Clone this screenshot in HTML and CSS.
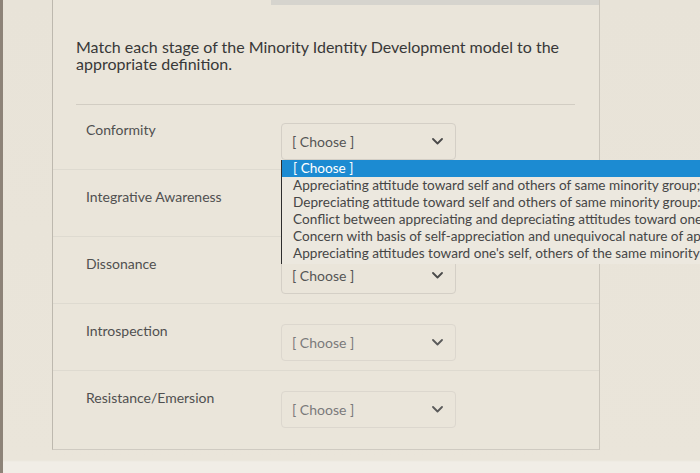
FILE: index.html
```html
<!DOCTYPE html>
<html lang="en">
<head>
<meta charset="utf-8">
<title>Matching question</title>
<link rel="stylesheet" href="styles.css">
</head>
<body>
<div class="screen">
  <div class="card">
    <div class="topbar"></div>
    <p class="question">Match each stage of the Minority Identity Development model to the appropriate definition.</p>
    <div class="divider"></div>
    <div class="rows">
      <div class="row">
        <div class="label">Conformity</div>
        <div class="select">
          <span class="value">[ Choose ]</span>
          <svg class="chev" width="11" height="7" viewBox="0 0 11 7"><path d="M1 1 L5.5 5.5 L10 1" fill="none" stroke="#4a4a4a" stroke-width="1.8" stroke-linecap="round" stroke-linejoin="round"/></svg>
          <ul class="dropdown">
            <li class="opt active">[ Choose ]</li>
            <li class="opt">Appreciating attitude toward self and others of same minority group; depreciating attitude toward others</li>
            <li class="opt">Depreciating attitude toward self and others of same minority group: appreciating attitude toward dominant group</li>
            <li class="opt">Conflict between appreciating and depreciating attitudes toward one's self and others</li>
            <li class="opt">Concern with basis of self-appreciation and unequivocal nature of appreciation of one's group</li>
            <li class="opt">Appreciating attitudes toward one's self, others of the same minority group, and other groups</li>
          </ul>
        </div>
      </div>
      <div class="row">
        <div class="label">Integrative Awareness</div>
        <div class="select covered">
          <span class="value">[ Choose ]</span>
          <svg class="chev" width="11" height="7" viewBox="0 0 11 7"><path d="M1 1 L5.5 5.5 L10 1" fill="none" stroke="#4a4a4a" stroke-width="1.8" stroke-linecap="round" stroke-linejoin="round"/></svg>
        </div>
      </div>
      <div class="row">
        <div class="label">Dissonance</div>
        <div class="select">
          <span class="value">[ Choose ]</span>
          <svg class="chev" width="11" height="7" viewBox="0 0 11 7"><path d="M1 1 L5.5 5.5 L10 1" fill="none" stroke="#4a4a4a" stroke-width="1.8" stroke-linecap="round" stroke-linejoin="round"/></svg>
        </div>
      </div>
      <div class="row">
        <div class="label">Introspection</div>
        <div class="select faded">
          <span class="value">[ Choose ]</span>
          <svg class="chev" width="11" height="7" viewBox="0 0 11 7"><path d="M1 1 L5.5 5.5 L10 1" fill="none" stroke="#5a5a5a" stroke-width="1.8" stroke-linecap="round" stroke-linejoin="round"/></svg>
        </div>
      </div>
      <div class="row">
        <div class="label">Resistance/Emersion</div>
        <div class="select faded">
          <span class="value">[ Choose ]</span>
          <svg class="chev" width="11" height="7" viewBox="0 0 11 7"><path d="M1 1 L5.5 5.5 L10 1" fill="none" stroke="#5a5a5a" stroke-width="1.8" stroke-linecap="round" stroke-linejoin="round"/></svg>
        </div>
      </div>
    </div>
  </div>
</div>
</body>
</html>
```

FILE: styles.css
```css
html, body {
  margin: 0;
  padding: 0;
}
body {
  width: 700px;
  height: 473px;
  overflow: hidden;
  background: #ebe6db;
  font-family: Lato, "Open Sans", sans-serif;
}
.screen {
  height: 473px;
  border-left: 3px solid #8d8378;
  box-sizing: border-box;
  background: linear-gradient(to bottom, #e8e3d8 0, #eae5da 460px, #f1ede6 462px);
}
.card {
  margin-left: 49px;
  width: 546px;
  border-left: 1px solid #bdb8ae;
  border-right: 1px solid #cbc6bc;
  border-bottom: 1px solid #cfcac1;
  background: #eae5da;
  padding-bottom: 12px;
}
.topbar {
  margin-left: 218px;
  height: 5px;
  background: #d6d4ce;
}
.question {
  margin: 0;
  padding: 33px 23px 0 23px;
  font-size: 16px;
  line-height: 17px;
  color: #383838;
}
.divider {
  margin: 32px 24px 0 23px;
  height: 1px;
  background: #d2cdc3;
}
.row {
  display: flex;
  align-items: flex-start;
  padding: 20px 0 9px 33px;
  border-top: 1px solid #dedad0;
}
.row:first-child {
  padding-top: 18px;
  border-top: none;
}
.label {
  width: 195px;
  flex: none;
  margin-top: -1px;
  font-size: 14px;
  line-height: 16px;
  color: #505050;
}
.select {
  position: relative;
  width: 175px;
  height: 37px;
  box-sizing: border-box;
  border: 1px solid #d4cfc6;
  border-radius: 4px;
  display: flex;
  align-items: center;
  justify-content: space-between;
  padding: 0 12px 0 10px;
  font-size: 14px;
  color: #555;
}
.select.faded {
  color: #7a7a7a;
  border-color: #dcd7ce;
}
.select.covered .value {
  visibility: hidden;
}
.chev {
  display: block;
}
.dropdown {
  position: absolute;
  top: 36px;
  left: -1px;
  width: 470px;
  margin: 0;
  padding: 0 0 2px 0;
  list-style: none;
  background: #ece8df;
  border-left: 1px solid #2e2e2e;
  z-index: 5;
}
.opt {
  font-size: 13.6px;
  line-height: 17px;
  height: 17px;
  padding-left: 11px;
  white-space: nowrap;
  overflow: hidden;
  color: #464646;
}
.opt.active {
  background: #1c8bd2;
  color: #ffffff;
}
```
